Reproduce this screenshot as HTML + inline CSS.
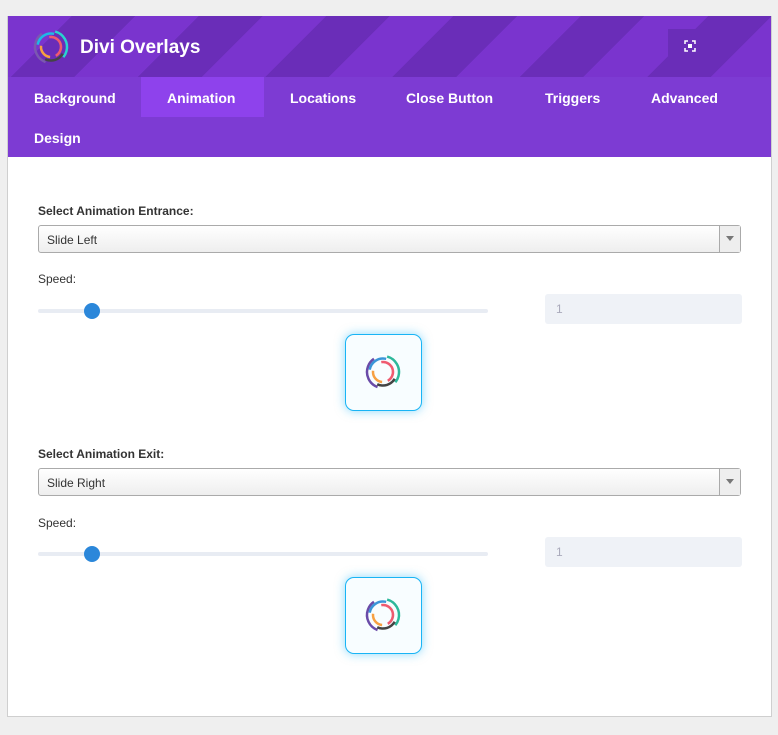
<!DOCTYPE html>
<html><head><style>
body{margin:0;background:#efefef;font-family:"Liberation Sans",sans-serif;width:778px;height:735px;position:relative;overflow:hidden}
.panel{position:absolute;left:7px;top:16px;width:763px;height:700px;background:#fff;border:1px solid #cfcfcf;border-top:none}
.hdr{position:absolute;left:0;top:0;width:763px;height:61px;background:repeating-linear-gradient(135deg,#7a34ce 0 45px,#6a2db8 45px 90px)}
.tabs{position:absolute;left:0;top:61px;width:763px;height:80px;background:#7d3bd3}
.tab{position:absolute;color:#fff;font-weight:bold;font-size:14px;height:40px;line-height:42px}
.title{position:absolute;left:72px;top:21px;color:#fff;font-size:19px;font-weight:bold}
.lbl{position:absolute;left:30px;font-size:12px;font-weight:bold;color:#333}
.sp{position:absolute;left:30px;font-size:12px;color:#333}
.sel{position:absolute;left:30px;width:703px;height:28px;border:1px solid #aaa;border-radius:3px;background:linear-gradient(#fff,#eee);font-size:12px;color:#333;line-height:28px;box-sizing:border-box;padding-left:8px}
.sel .ar{position:absolute;right:0;top:0;width:20px;height:26px;border-left:1px solid #aaa;background:#eee}
.sel .ar:after{content:"";position:absolute;left:6px;top:10px;border:4px solid transparent;border-top:5px solid #777}
.trk{position:absolute;left:30px;width:450px;height:4px;background:#e8ecf3;border-radius:2px}
.dot{position:absolute;left:46px;top:-6px;width:16px;height:16px;border-radius:50%;background:#2b87da}
.num{position:absolute;left:537px;width:197px;height:30px;background:#eff2f7;border-radius:3px;color:#aab;font-size:12px;line-height:30px;padding-left:11px;box-sizing:border-box}
.box{position:absolute;left:337px;width:75px;height:75px;border:1px solid #19b4f5;border-radius:9px;background:#f8fdff;box-shadow:0 0 10px rgba(25,180,245,.5)}
</style></head><body>
<div class="panel">
<div class="hdr">
<svg style="position:absolute;left:24px;top:12px" width="38" height="38" viewBox="0 0 38 38" fill="none" stroke-width="2.5">
<circle cx="19" cy="19" r="16" stroke="#7b58b0" stroke-dasharray="35 100" transform="rotate(110 19 19)"/>
<circle cx="19" cy="19" r="16" stroke="#28d3cf" stroke-dasharray="32 100" transform="rotate(-75 19 19)"/>
<circle cx="19" cy="19" r="13.5" stroke="#1fb8e6" stroke-dasharray="22 100" transform="rotate(190 19 19)"/>
<circle cx="19" cy="19" r="13.5" stroke="#444" stroke-dasharray="20 100" transform="rotate(30 19 19)"/>
<circle cx="19" cy="19" r="10" stroke="#ef5a6f" stroke-dasharray="28 70" transform="rotate(-100 19 19)"/>
<circle cx="19" cy="19" r="10" stroke="#f7a042" stroke-dasharray="16 70" transform="rotate(95 19 19)"/>
</svg>
<div class="title">Divi Overlays</div>
<div style="position:absolute;left:660px;top:13px;width:42px;height:34px;background:#6a2db8"></div>
<svg style="position:absolute;left:676px;top:24px" width="12" height="12" viewBox="0 0 12 12" fill="none" stroke="#fff" stroke-width="1.5"><path d="M1 4V1h3M8 1h3v3M11 8v3H8M4 11H1V8"/><rect x="4" y="4" width="4" height="4" fill="#fff" stroke="none"/></svg>
</div>
<div class="tabs">
<div style="position:absolute;left:133px;top:0;width:123px;height:40px;background:#8e42ec"></div>
<div class="tab" style="left:26px">Background</div>
<div class="tab" style="left:159px">Animation</div>
<div class="tab" style="left:282px">Locations</div>
<div class="tab" style="left:398px">Close Button</div>
<div class="tab" style="left:537px">Triggers</div>
<div class="tab" style="left:643px">Advanced</div>
<div class="tab" style="left:26px;top:40px">Design</div>
</div>
<div class="lbl" style="top:188px">Select Animation Entrance:</div>
<div class="sel" style="top:209px">Slide Left<div class="ar"></div></div>
<div class="sp" style="top:256px">Speed:</div>
<div class="trk" style="top:293px"><div class="dot"></div></div>
<div class="num" style="top:278px">1</div>
<div class="box" style="top:318px"><svg style="position:absolute;left:18px;top:18px" width="38" height="38" viewBox="0 0 38 38" fill="none" stroke-width="2.5">
<circle cx="19" cy="19" r="16" stroke="#6a4ba8" stroke-dasharray="35 100" transform="rotate(110 19 19)"/>
<circle cx="19" cy="19" r="16" stroke="#2db89a" stroke-dasharray="32 100" transform="rotate(-75 19 19)"/>
<circle cx="19" cy="19" r="13.5" stroke="#3a95d8" stroke-dasharray="22 100" transform="rotate(190 19 19)"/>
<circle cx="19" cy="19" r="13.5" stroke="#444" stroke-dasharray="20 100" transform="rotate(30 19 19)"/>
<circle cx="19" cy="19" r="10" stroke="#ef5a6f" stroke-dasharray="28 70" transform="rotate(-100 19 19)"/>
<circle cx="19" cy="19" r="10" stroke="#f7a042" stroke-dasharray="16 70" transform="rotate(95 19 19)"/>
</svg></div>
<div class="lbl" style="top:431px">Select Animation Exit:</div>
<div class="sel" style="top:452px">Slide Right<div class="ar"></div></div>
<div class="sp" style="top:500px">Speed:</div>
<div class="trk" style="top:536px"><div class="dot"></div></div>
<div class="num" style="top:521px">1</div>
<div class="box" style="top:561px"><svg style="position:absolute;left:18px;top:18px" width="38" height="38" viewBox="0 0 38 38" fill="none" stroke-width="2.5">
<circle cx="19" cy="19" r="16" stroke="#6a4ba8" stroke-dasharray="35 100" transform="rotate(110 19 19)"/>
<circle cx="19" cy="19" r="16" stroke="#2db89a" stroke-dasharray="32 100" transform="rotate(-75 19 19)"/>
<circle cx="19" cy="19" r="13.5" stroke="#3a95d8" stroke-dasharray="22 100" transform="rotate(190 19 19)"/>
<circle cx="19" cy="19" r="13.5" stroke="#444" stroke-dasharray="20 100" transform="rotate(30 19 19)"/>
<circle cx="19" cy="19" r="10" stroke="#ef5a6f" stroke-dasharray="28 70" transform="rotate(-100 19 19)"/>
<circle cx="19" cy="19" r="10" stroke="#f7a042" stroke-dasharray="16 70" transform="rotate(95 19 19)"/>
</svg></div>
</div>
</body></html>
